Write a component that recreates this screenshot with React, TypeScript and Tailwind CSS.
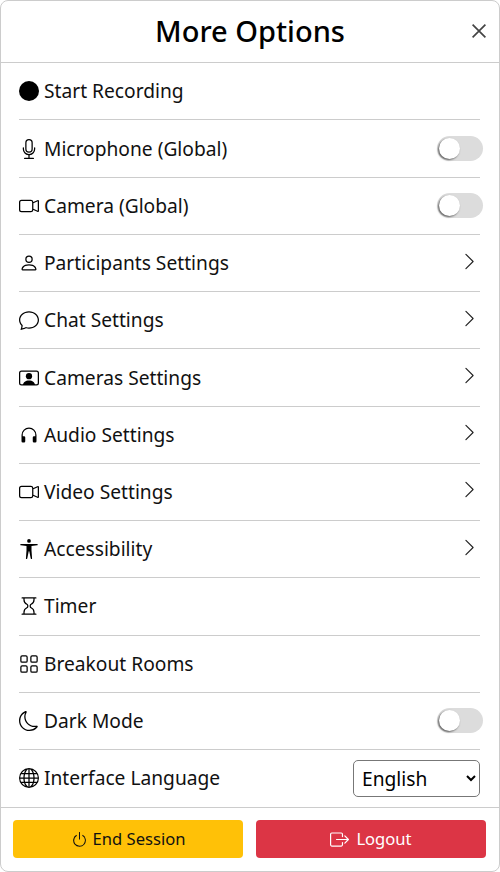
import type { ReactNode } from 'react'
import {
  BsBoxArrowRight,
  BsCameraVideo,
  BsChat,
  BsChevronRight,
  BsCircleFill,
  BsGlobe,
  BsGrid,
  BsHeadphones,
  BsHourglass,
  BsMic,
  BsMoon,
  BsPerson,
  BsPersonVideo,
  BsPower,
  BsUniversalAccess,
} from 'react-icons/bs'

function Toggle() {
  return (
    <div className="flex h-[25px] w-[46px] items-center rounded-full bg-[#dcdcdc] pl-[2px]">
      <div className="h-[21px] w-[21px] rounded-full bg-white shadow-[-1px_1px_2px_rgba(0,0,0,0.6)]" />
    </div>
  )
}

function Row({
  icon,
  label,
  right,
  last,
}: {
  icon: ReactNode
  label: string
  right?: ReactNode
  last?: boolean
}) {
  return (
    <div
      className={`flex h-[57.24px] items-center justify-between border-b ${last ? 'border-transparent' : 'border-[#ccc]'}`}
    >
      <div className="flex items-center">
        <span className="flex w-[25px] justify-center pr-[5px] text-[20px]">{icon}</span>
        <span className="text-[19.2px] leading-[30px] text-[#111]">{label}</span>
      </div>
      {right}
    </div>
  )
}

const chevron = <BsChevronRight className="mr-[1px] mb-[4px] text-[19px] text-[#222]" />
const toggle = (
  <div className="mr-[-3px]">
    <Toggle />
  </div>
)

export default function App() {
  return (
    <div className="h-[872px] w-[500px] bg-white font-['Noto_Sans',sans-serif] text-black">
      <div className="flex h-full flex-col rounded-[8px] border border-[#ccc]">
        <div className="relative flex h-[62.51px] items-center justify-center border-b border-[#ccc] pb-[2px]">
          <h1 className="text-[29px] font-medium">More Options</h1>
          <svg
            viewBox="0 0 14 14"
            className="absolute right-[13px] top-[23px] h-[14px] w-[14px]"
            fill="none"
            stroke="#444"
            strokeWidth="1.7"
          >
            <path d="M0.6 0.6 13.4 13.4M13.4 0.6 0.6 13.4" />
          </svg>
        </div>
        <div className="flex-1 pr-[19px] pl-[18px]">
          <Row icon={<BsCircleFill />} label="Start Recording" />
          <Row icon={<BsMic />} label="Microphone (Global)" right={toggle} />
          <Row icon={<BsCameraVideo />} label="Camera (Global)" right={toggle} />
          <Row icon={<BsPerson />} label="Participants Settings" right={chevron} />
          <Row icon={<BsChat />} label="Chat Settings" right={chevron} />
          <Row icon={<BsPersonVideo />} label="Cameras Settings" right={chevron} />
          <Row icon={<BsHeadphones />} label="Audio Settings" right={chevron} />
          <Row icon={<BsCameraVideo />} label="Video Settings" right={chevron} />
          <Row icon={<BsUniversalAccess />} label="Accessibility" right={chevron} />
          <Row icon={<BsHourglass />} label="Timer" />
          <Row icon={<BsGrid />} label="Breakout Rooms" />
          <Row icon={<BsMoon />} label="Dark Mode" right={toggle} />
          <Row
            icon={<BsGlobe />}
            label="Interface Language"
            last
            right={
              <select className="h-[37px] w-[127px] rounded-[5px] border border-[#777] bg-white pl-[4px] text-[19.2px]">
                <option>English</option>
              </select>
            }
          />
        </div>
        <div className="flex h-[64px] items-center gap-[13px] border-t border-[#ccc] pr-[13px] pb-[1px] pl-[12px]">
          <button className="flex h-[38px] flex-1 items-center justify-center gap-[5px] rounded-[4px] bg-[#ffc107] text-[16.6px] text-[#111]">
            <BsPower className="text-[17px]" />
            End Session
          </button>
          <button className="flex h-[38px] flex-1 items-center justify-center gap-[7px] rounded-[4px] bg-[#dc3545] text-[16.6px] text-white">
            <BsBoxArrowRight className="text-[19px]" />
            Logout
          </button>
        </div>
      </div>
    </div>
  )
}
